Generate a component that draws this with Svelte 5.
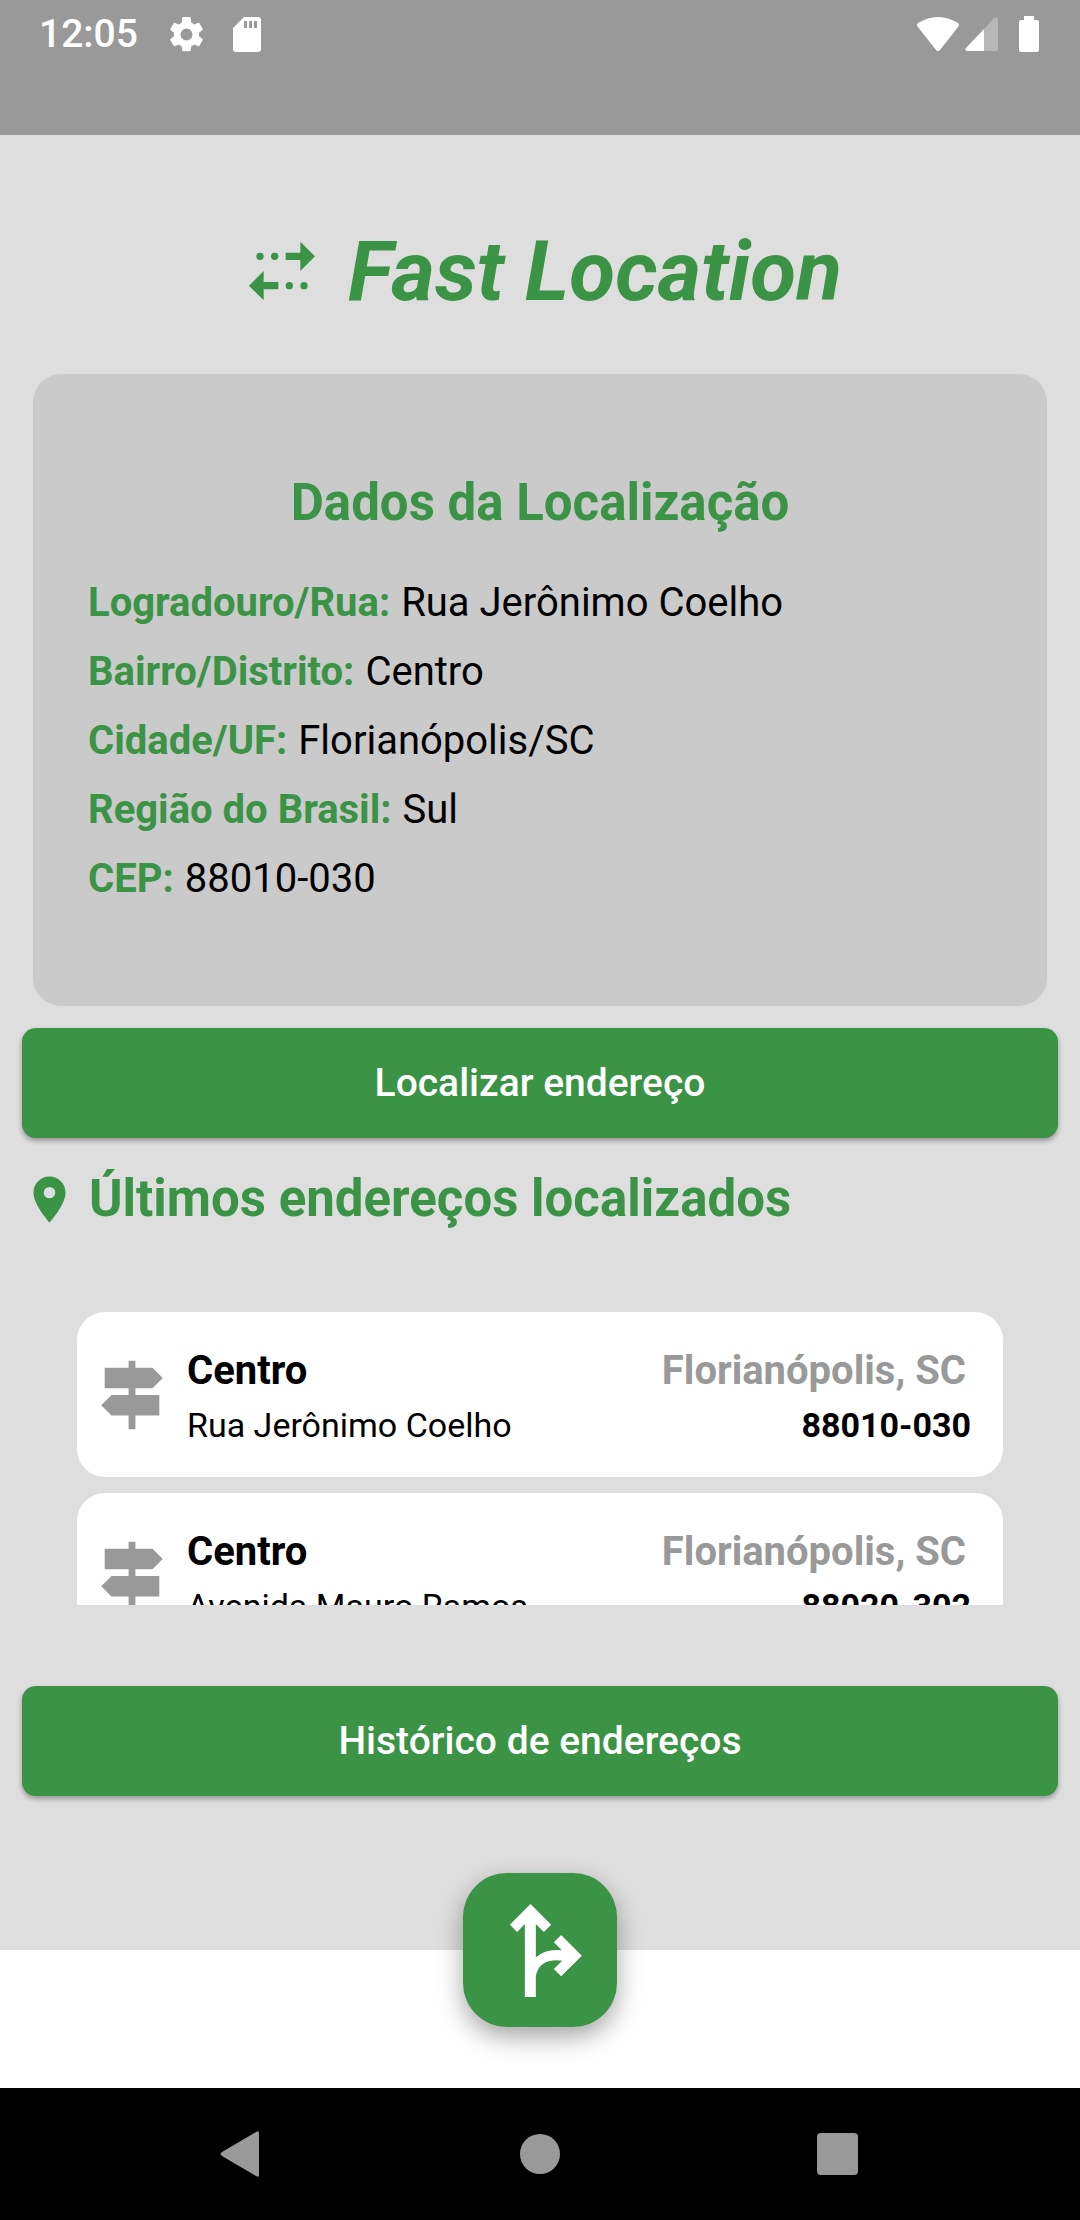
<script>
  const details = [
    { label: 'Logradouro/Rua:', value: 'Rua Jerônimo Coelho' },
    { label: 'Bairro/Distrito:', value: 'Centro' },
    { label: 'Cidade/UF:', value: 'Florianópolis/SC' },
    { label: 'Região do Brasil:', value: 'Sul' },
    { label: 'CEP:', value: '88010-030' }
  ];

  const recent = [
    { district: 'Centro', street: 'Rua Jerônimo Coelho', city: 'Florianópolis, SC', cep: '88010-030' },
    { district: 'Centro', street: 'Avenida Mauro Ramos', city: 'Florianópolis, SC', cep: '88020-302' }
  ];
</script>

<div class="screen">
  <header class="status">
    <div class="group">
      <span class="time">12:05</span>
      <svg class="gear" viewBox="2 2 20 20" aria-hidden="true">
        <path d="M19.14 12.94c.04-.3.06-.61.06-.94 0-.32-.02-.64-.07-.94l2.03-1.58a.49.49 0 0 0 .12-.61l-1.92-3.32a.488.488 0 0 0-.59-.22l-2.39.96c-.5-.38-1.03-.7-1.62-.94L14.4 2.4c-.04-.24-.24-.4-.48-.4h-3.84c-.24 0-.43.16-.47.4L9.25 5.35c-.59.24-1.13.57-1.62.94l-2.39-.96a.48.48 0 0 0-.59.22L2.74 8.87c-.12.21-.08.47.12.61l2.03 1.58c-.05.3-.09.63-.09.94s.02.64.07.94l-2.03 1.58a.49.49 0 0 0-.12.61l1.92 3.32c.12.22.37.29.59.22l2.39-.96c.5.38 1.03.7 1.62.94l.36 2.54c.05.24.24.41.48.41h3.84c.24 0 .44-.17.47-.41l.36-2.54c.59-.24 1.13-.56 1.62-.94l2.39.96c.22.08.47 0 .59-.22l1.92-3.32a.48.48 0 0 0-.12-.61l-2.01-1.58zM12 15.4a3.4 3.4 0 1 1 0-6.8 3.4 3.4 0 0 1 0 6.8z" />
      </svg>
      <svg class="sd" viewBox="0 0 28 35" aria-hidden="true">
        <path fill-rule="evenodd" d="M11 0h14a3 3 0 0 1 3 3v29a3 3 0 0 1-3 3H3a3 3 0 0 1-3-3V11zM11 4v7h3V4zM16 4v7h3V4zM21 4v7h3V4z" />
      </svg>
    </div>
    <div class="group right">
      <svg class="wifi" viewBox="0 0 42 34" aria-hidden="true">
        <path d="M1 6Q21-6 41 6Q43 8 41 10L23 33Q21 35 19 33L1 10Q-1 8 1 6z" />
      </svg>
      <svg class="signal" viewBox="0 0 33 34" aria-hidden="true">
        <path opacity=".3" d="M29 1Q33-1 33 2V32Q33 34 31 34H19V12z" />
        <path d="M19 12V34H2Q-1 33 1 31z" />
      </svg>
      <svg class="battery" viewBox="0 0 20 36" aria-hidden="true">
        <path d="M5 0h10v4h3a2 2 0 0 1 2 2v28a2 2 0 0 1-2 2H2a2 2 0 0 1-2-2V6a2 2 0 0 1 2-2h3z" />
      </svg>
    </div>
  </header>

  <main>
    <h1>
      <svg viewBox="0 0 24 24" aria-hidden="true">
        <path d="M17 4l4 4-4 4V9h-4V7h4z" />
        <circle cx="10" cy="8" r="1" />
        <circle cx="6" cy="8" r="1" />
        <path d="M7 12v3h4v2H7v3l-4-4z" />
        <circle cx="14" cy="16" r="1" />
        <circle cx="18" cy="16" r="1" />
      </svg>
      <span>Fast Location</span>
    </h1>

    <section class="panel">
      <h2>Dados da Localização</h2>
      <dl>
        {#each details as item}
          <div>
            <dt>{item.label}</dt>
            <dd>{item.value}</dd>
          </div>
        {/each}
      </dl>
    </section>

    <button class="action" type="button">Localizar endereço</button>

    <section class="recent">
      <h2>
        <svg viewBox="0 0 24 24" aria-hidden="true">
          <path d="M12 2C8.130 2 5 5.130 5 9c0 5.250 7 13 7 13s7-7.750 7-13c0-3.870-3.130-7-7-7zm0 9.500a2.500 2.500 0 1 1 0-5 2.500 2.500 0 0 1 0 5z" />
        </svg>
        <span>Últimos endereços localizados</span>
      </h2>
      <ul>
        {#each recent as place}
          <li>
            <svg viewBox="0 0 24 24" aria-hidden="true">
              <path d="M13 10h5l3-3-3-3h-5V2h-2v2H4v6h7v2H6l-3 3 3 3h5v4h2v-4h7v-6h-7z" />
            </svg>
            <div class="place">
              <strong>{place.district}</strong>
              <span>{place.street}</span>
            </div>
            <div class="code">
              <strong>{place.city}</strong>
              <span>{place.cep}</span>
            </div>
          </li>
        {/each}
      </ul>
    </section>

    <button class="action" type="button">Histórico de endereços</button>
  </main>

  <footer>
    <button class="fab" type="button" aria-label="Traçar rota">
      <svg viewBox="296 191 248 279" aria-hidden="true">
        <path d="M390 191L452 253L430 275L406 251V351Q438 324 484 330L460 306L482 284L544 346L482 408L460 386L485 361Q416 353 406 408V470H373V251L350 275L328 253z" />
      </svg>
    </button>
  </footer>

  <nav>
    <button type="button" aria-label="Voltar">
      <svg viewBox="0 0 48 48" aria-hidden="true"><path d="M3 22L37 2Q40 0 40 3V45Q40 48 37 46L3 26Q0 24 3 22z" /></svg>
    </button>
    <button type="button" aria-label="Início">
      <svg viewBox="0 0 48 48" aria-hidden="true"><circle cx="24" cy="24" r="20" /></svg>
    </button>
    <button type="button" aria-label="Recentes">
      <svg viewBox="0 0 48 48" aria-hidden="true"><rect x="4" y="3" width="41" height="42" rx="4" /></svg>
    </button>
  </nav>
</div>

<style>
  :global(body) {
    margin: 0;
  }

  .screen {
    --green: #3b9345;
    --grey: #999;
    display: flex;
    flex-direction: column;
    min-height: 100vh;
    background: #fff;
    color: #000;
    font-family: Roboto, sans-serif;
    font-size: 39px;
  }

  svg {
    display: block;
    flex: none;
    fill: currentColor;
  }

  h1,
  h2,
  ul,
  dl,
  dd {
    margin: 0;
    padding: 0;
  }

  button {
    border: 0;
    padding: 0;
    font: inherit;
    cursor: pointer;
  }

  .status {
    display: flex;
    justify-content: space-between;
    align-items: flex-start;
    box-sizing: border-box;
    height: 135px;
    padding: 10px 41px 0 39px;
    background: var(--grey);
    color: #fff;
  }

  .group {
    display: flex;
    align-items: center;
    height: 48px;
  }

  .time {
    font-weight: 500;
    margin-right: 31px;
  }

  .gear {
    width: 35px;
    height: 35px;
    margin-right: 29px;
  }

  .sd {
    width: 28px;
    height: 35px;
  }

  .wifi {
    width: 42px;
    height: 34px;
    margin-right: 6px;
  }

  .signal {
    width: 33px;
    height: 34px;
    margin-right: 21px;
  }

  .battery {
    width: 20px;
    height: 36px;
  }

  main {
    flex: 1;
    display: flex;
    flex-direction: column;
    padding: 82px 22px 0;
    background: #dedede;
  }

  h1 {
    display: flex;
    justify-content: center;
    align-items: center;
    gap: 22px;
    height: 108px;
    color: var(--green);
    font-size: 84px;
    font-style: italic;
    font-weight: 700;
  }

  h1 svg {
    width: 88px;
    height: 88px;
  }

  h2 {
    color: var(--green);
    font-size: 51px;
    font-weight: 700;
    line-height: 60px;
  }

  .panel {
    margin: 49px 11px 22px;
    padding: 99px 55px 93px;
    border-radius: 28px;
    background: #cacaca;
  }

  .panel h2 {
    text-align: center;
  }

  dl {
    margin-top: 35px;
    font-size: 40px;
  }

  dl div {
    display: flex;
    gap: 11px;
    line-height: 69px;
  }

  dt {
    color: var(--green);
    font-weight: 700;
  }

  .action {
    height: 110px;
    flex: none;
    border-radius: 14px;
    background: var(--green);
    color: #fff;
    font-weight: 500;
    box-shadow: 0 3px 5px rgba(0, 0, 0, 0.32);
  }

  .recent h2 {
    display: flex;
    align-items: center;
    gap: 12px;
    margin-top: 31px;
  }

  .recent h2 svg {
    width: 55px;
    height: 55px;
  }

  ul {
    display: flex;
    flex-direction: column;
    gap: 16px;
    height: 293px;
    margin: 83px 55px 81px;
    overflow: hidden;
    list-style: none;
  }

  li {
    display: flex;
    flex: none;
    align-items: center;
    box-sizing: border-box;
    height: 165px;
    padding: 0 32px 0 14px;
    border-radius: 28px;
    background: #fff;
  }

  li svg {
    width: 82px;
    height: 82px;
    margin-right: 14px;
    color: var(--grey);
  }

  .place,
  .code {
    display: flex;
    flex-direction: column;
    padding-top: 6px;
    font-size: 34px;
    line-height: 54px;
  }

  .place {
    flex: 1;
  }

  .code {
    align-items: flex-end;
    font-weight: 700;
  }

  li strong {
    font-size: 40px;
    font-weight: 700;
  }

  .code strong {
    padding-right: 5px;
    color: var(--grey);
  }

  footer {
    position: relative;
    height: 138px;
    background: #fff;
  }

  .fab {
    position: absolute;
    top: -77px;
    left: 50%;
    display: flex;
    justify-content: center;
    align-items: center;
    width: 154px;
    height: 154px;
    margin-left: -77px;
    border-radius: 44px;
    background: var(--green);
    color: #fff;
    box-shadow: 0 10px 24px rgba(0, 0, 0, 0.35);
  }

  .fab svg {
    width: 83px;
    height: 93px;
  }

  nav {
    display: flex;
    justify-content: center;
    align-items: center;
    gap: 249px;
    height: 132px;
    background: #000;
  }

  nav button {
    background: none;
    color: var(--grey);
  }

  nav svg {
    width: 48px;
    height: 48px;
  }
</style>
